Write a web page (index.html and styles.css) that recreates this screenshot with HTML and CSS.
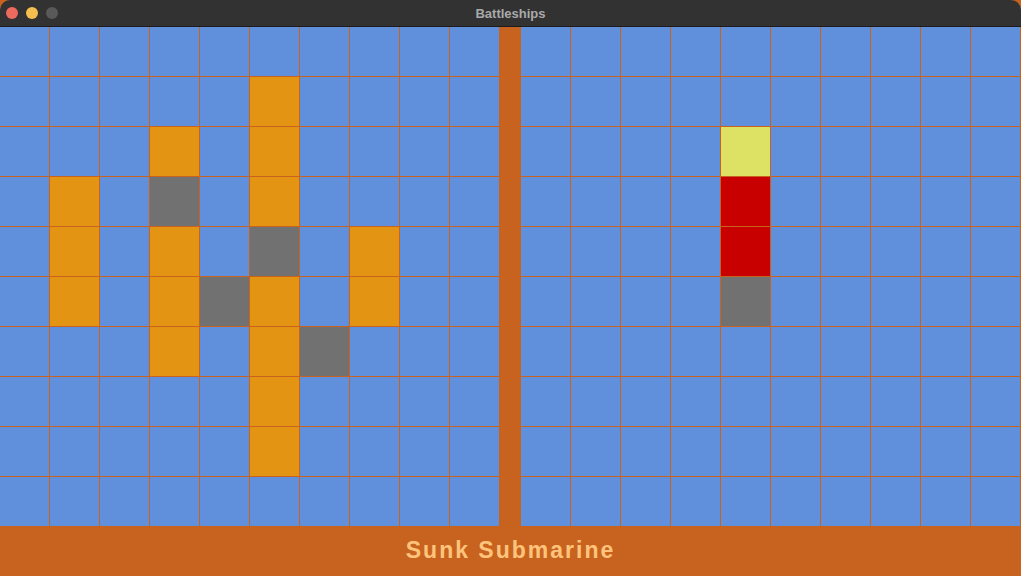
FILE: index.html
```html
<!DOCTYPE html>
<html lang="en">
    <head>
        <meta charset="UTF-8">
        <meta name="viewport" content="width=device-width, initial-scale=1.0">
        <title>Battleships</title>
        <link rel="stylesheet" href="styles.css">
    </head>
    <body>
        <div class="window">
            <div class="titlebar">
                <div class="lights">
                    <span class="light close"></span>
                    <span class="light minimize"></span>
                    <span class="light zoom"></span>
                </div>
                <div class="title">Battleships</div>
            </div>
            <div class="boards">
                <div class="board" id="player"></div>
                <div class="divider"></div>
                <div class="board" id="enemy"></div>
            </div>
            <div class="status">Sunk Submarine</div>
        </div>
        <script>
            // row, col -> state
            const player = {
                "1,5": "ship",
                "2,3": "ship", "2,5": "ship",
                "3,1": "ship", "3,3": "miss", "3,5": "ship",
                "4,1": "ship", "4,3": "ship", "4,5": "miss", "4,7": "ship",
                "5,1": "ship", "5,3": "ship", "5,4": "miss", "5,5": "ship", "5,7": "ship",
                "6,3": "ship", "6,5": "ship", "6,6": "miss",
                "7,5": "ship",
                "8,5": "ship",
            };
            const enemy = {
                "2,4": "cursor",
                "3,4": "hit",
                "4,4": "hit",
                "5,4": "miss",
            };

            function fill(id, states) {
                const board = document.getElementById(id);
                for (let row = 0; row < 10; row++) {
                    for (let col = 0; col < 10; col++) {
                        const cell = document.createElement("div");
                        cell.className = "cell";
                        const state = states[row + "," + col];
                        if (state) cell.classList.add(state);
                        board.appendChild(cell);
                    }
                }
            }
            fill("player", player);
            fill("enemy", enemy);
        </script>
    </body>
</html>
```
FILE: styles.css
```css
body {
    background: white;
    margin: 0;
    font-family: "Liberation Sans", Arial, sans-serif;
}
.window {
    width: 1021px;
    height: 576px;
    display: flex;
    flex-direction: column;
    background: #c8631f;
}
.titlebar {
    height: 26px;
    background: #323233;
    border-bottom: 1px solid #1c1c1c;
    border-radius: 10px 10px 0 0;
    display: flex;
    align-items: center;
    position: relative;
}
.lights {
    display: flex;
    gap: 8px;
    padding-left: 6px;
}
.light {
    width: 12px;
    height: 12px;
    border-radius: 50%;
}
.close {
    background: #ed6a5e;
}
.minimize {
    background: #f5bf4f;
}
.zoom {
    background: #59595a;
}
.title {
    position: absolute;
    left: 0;
    right: 0;
    text-align: center;
    color: #a9a9a9;
    font-size: 13px;
    font-weight: bold;
    pointer-events: none;
}
.boards {
    display: flex;
    height: 499px;
}
.board {
    width: 500px;
    display: grid;
    grid-template-columns: repeat(10, 50px);
    grid-template-rows: repeat(10, 50px);
}
.divider {
    width: 21px;
    background: #c8631f;
}
.cell {
    box-sizing: border-box;
    background: #6090dc;
    border-right: 1px solid #c8631f;
    border-bottom: 1px solid #c8631f;
}
.ship {
    background: #e39412;
}
.miss {
    background: #717171;
}
.hit {
    background: #c80000;
}
.cursor {
    background: #dee264;
}
.status {
    flex: 1;
    display: flex;
    align-items: center;
    justify-content: center;
    color: #ffc47c;
    font-size: 23px;
    font-weight: bold;
    letter-spacing: 2px;
    padding-bottom: 2px;
}
```
